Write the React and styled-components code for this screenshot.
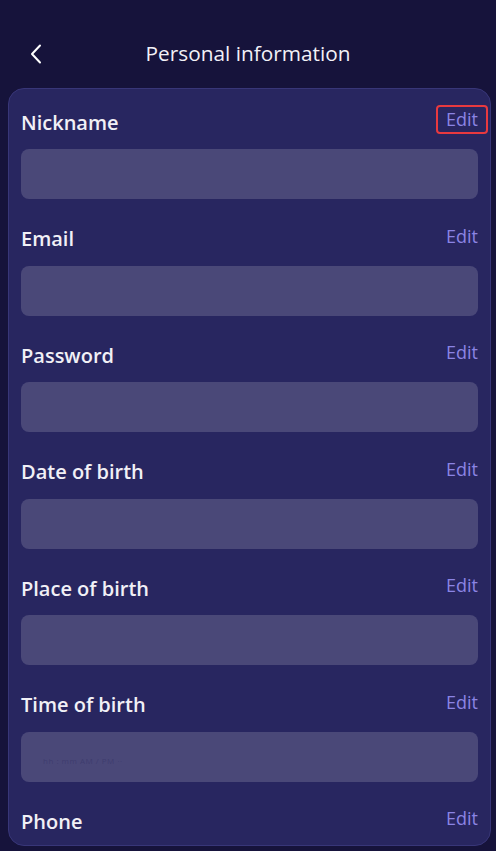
import React from "react";
import styled, { createGlobalStyle } from "styled-components";

const GlobalStyle = createGlobalStyle`
  html, body { margin: 0; padding: 0; background: #16133b; }
  body { font-family: "Open Sans", "Noto Sans", sans-serif; }
  * { box-sizing: border-box; }
`;

const Screen = styled.div`
  height: 851px;
  display: flex;
  flex-direction: column;
  background: #16133b;
  overflow: hidden;
`;

const Header = styled.header`
  position: relative;
  height: 88px;
  padding-top: 18px;
  display: flex;
  align-items: center;
  justify-content: center;
  flex-shrink: 0;
`;

const BackButton = styled.button`
  position: absolute;
  left: 26px;
  top: 40px;
  width: 20px;
  height: 28px;
  padding: 0;
  border: none;
  background: none;
  color: #ffffff;
  display: flex;
  align-items: center;
  justify-content: center;
`;

const Title = styled.h1`
  margin: 0;
  font-size: 20.8px;
  font-weight: 500;
  color: #f2f1f7;
`;

const Card = styled.section`
  flex: 1;
  margin: 0 5px 5px 8px;
  background: #282660;
  border: 1px solid #383678;
  border-radius: 16px;
  padding: 19px 12px 0 12px;
  overflow: hidden;
  display: flex;
  flex-direction: column;
  gap: 25.5px;
`;

const Field = styled.div`
  display: flex;
  flex-direction: column;
  gap: 13px;
`;

const FieldHeader = styled.div`
  display: flex;
  align-items: center;
  justify-content: space-between;
  height: 28px;
  padding-right: 0;
`;

const Label = styled.span`
  font-size: 20px;
  font-weight: 600;
  color: #f1f0f6;
`;

const EditButton = styled.button`
  position: relative;
  margin-top: -6px;
  padding: 0;
  border: none;
  background: none;
  font-family: inherit;
  font-size: 18px;
  font-weight: 500;
  color: #8b84e4;
  &::after {
    content: "";
    display: ${(p) => (p.$highlighted ? "block" : "none")};
    position: absolute;
    left: -10px;
    right: -10px;
    top: -2px;
    bottom: -3px;
    border: 2.5px solid #e8393f;
    border-radius: 4px;
  }
`;

const InputBox = styled.div`
  height: 50px;
  border-radius: 8px;
  background: #4a4878;
  display: flex;
  align-items: flex-end;
  padding: 0 0 16px 22px;
`;

const Ghost = styled.span`
  font-size: 8px;
  color: rgba(40, 38, 90, 0.35);
  letter-spacing: 0.5px;
`;

const fields = [
  { label: "Nickname", highlighted: true },
  { label: "Email" },
  { label: "Password" },
  { label: "Date of birth" },
  { label: "Place of birth" },
  { label: "Time of birth", ghost: "hh : mm  AM / PM  ··" },
  { label: "Phone" },
];

export default function App() {
  return (
    <>
      <GlobalStyle />
      <Screen>
        <Header>
          <BackButton aria-label="Back">
            <svg width="12" height="20" viewBox="0 0 12 20" fill="none">
              <path d="M10 1.5 L2 10 L10 18.5" stroke="#ffffff" strokeWidth="2" strokeLinecap="round" strokeLinejoin="round" />
            </svg>
          </BackButton>
          <Title>Personal information</Title>
        </Header>
        <Card>
          {fields.map((f) => (
            <Field key={f.label}>
              <FieldHeader>
                <Label>{f.label}</Label>
                <EditButton $highlighted={f.highlighted}>Edit</EditButton>
              </FieldHeader>
              <InputBox>{f.ghost && <Ghost>{f.ghost}</Ghost>}</InputBox>
            </Field>
          ))}
        </Card>
      </Screen>
    </>
  );
}
